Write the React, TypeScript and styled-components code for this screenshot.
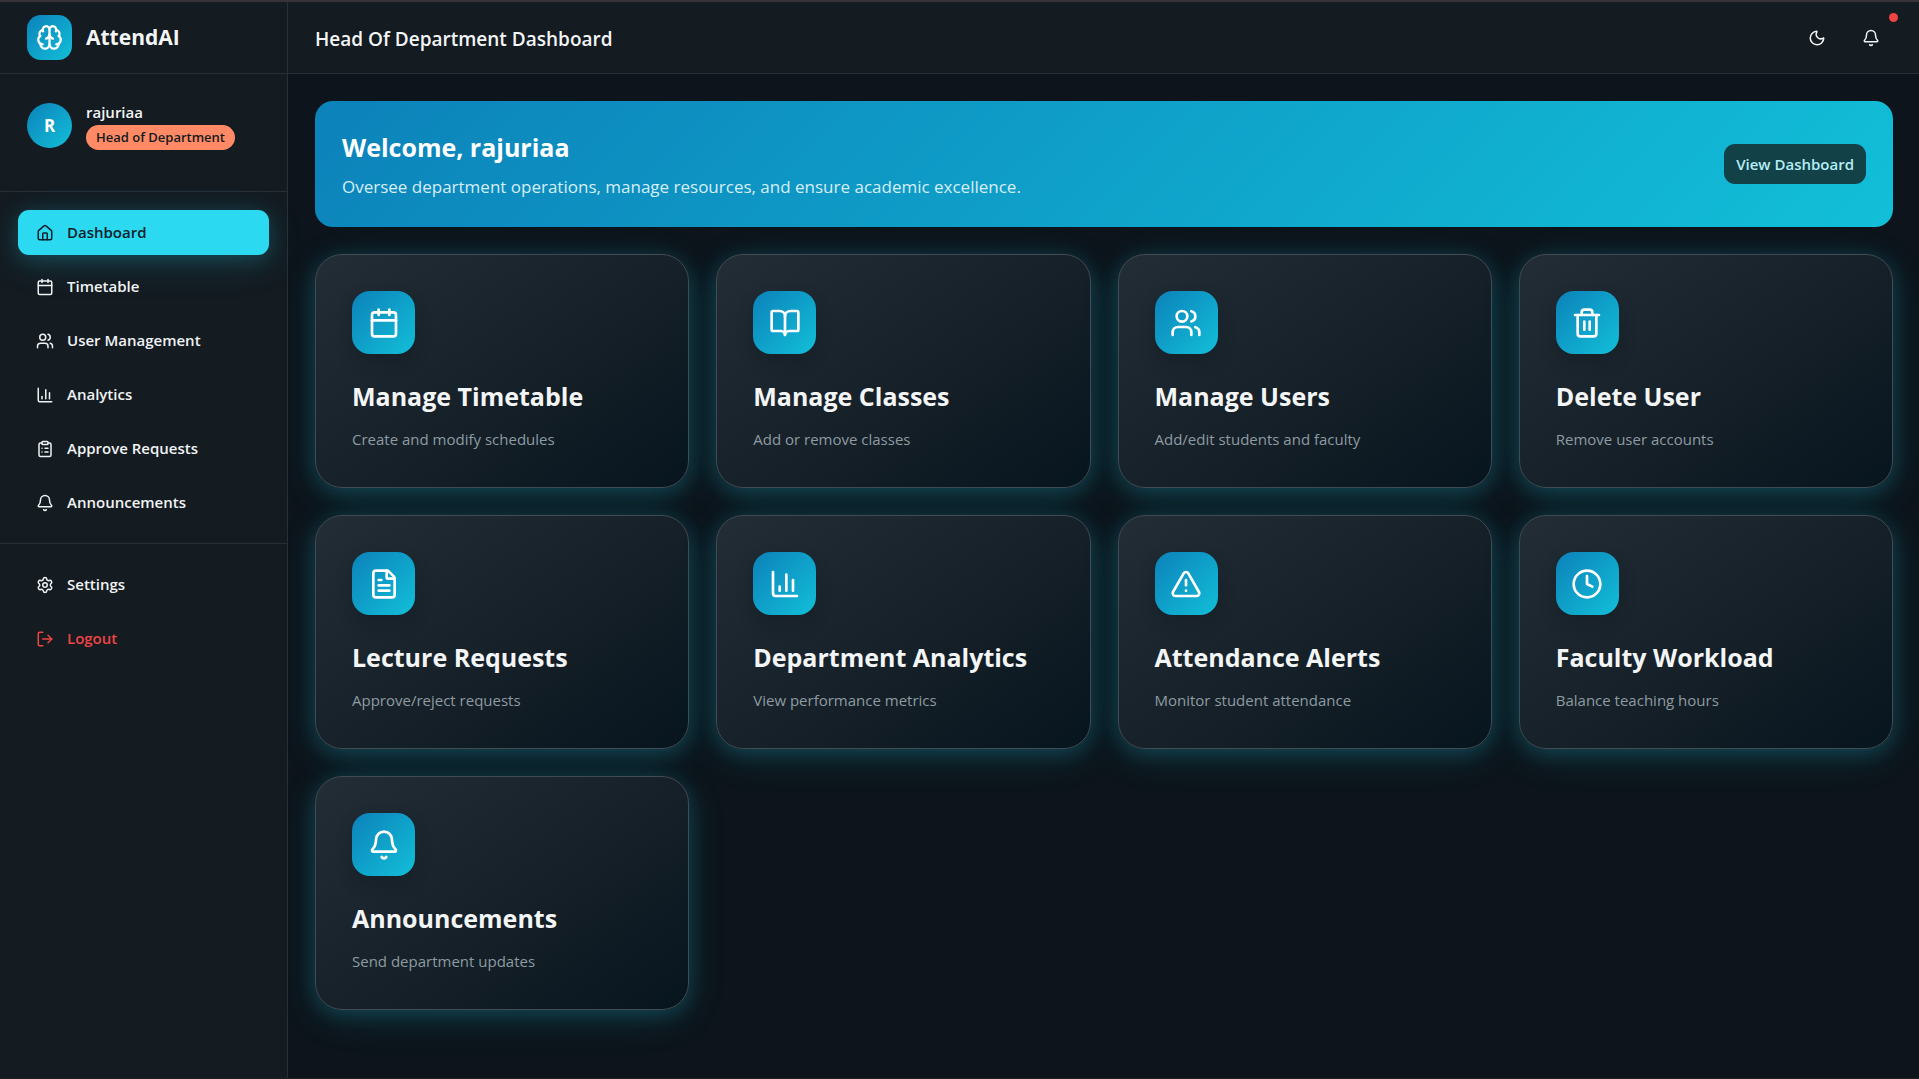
import React from "react";
import styled, { createGlobalStyle } from "styled-components";
import {
  Bell, BookOpen, Brain, Calendar, ChartColumn, ClipboardList, Clock, FileText,
  House, LogOut, Moon, Settings, Trash2, TriangleAlert, Users,
} from "lucide-react";
import type { LucideIcon } from "lucide-react";

const brand = "linear-gradient(135deg, #0c82ba 0%, #12bfd8 100%)";
const line = "#263038";
const glow = "0 4px 20px rgba(34, 211, 238, 0.2), 0 8px 40px rgba(34, 211, 238, 0.12)";

const GlobalStyle = createGlobalStyle`
  *, *::before, *::after { box-sizing: border-box; }
  body {
    margin: 0;
    background: #0d141b;
    color: #f3f5f6;
    font-family: "Open Sans", "Noto Sans", sans-serif;
    font-size: 15px;
    line-height: 23px;
  }
  h1, h2, h3, p { margin: 0; }
  button { font: inherit; color: inherit; border: 0; background: none; padding: 0; cursor: pointer; }
  a { color: inherit; text-decoration: none; }
  ul { list-style: none; margin: 0; padding: 0; }
`;

const Shell = styled.div`
  display: grid;
  grid-template-columns: 288px minmax(0, 1fr);
  min-height: 100vh;
  border-top: 2px solid #383338;
  border-bottom: 1px solid #211f23;
`;

const Sidebar = styled.aside`
  background: #141b21;
  border-right: 1px solid ${line};
`;

const Brand = styled.div`
  display: flex;
  align-items: center;
  gap: 14px;
  height: 72px;
  padding: 0 27px;
  border-bottom: 1px solid ${line};
  font-size: 21px;
  font-weight: 700;
`;

const Tile = styled.span<{ $size: number; $radius: number }>`
  display: flex;
  align-items: center;
  justify-content: center;
  flex: none;
  width: ${(p) => p.$size}px;
  height: ${(p) => p.$size}px;
  border-radius: ${(p) => p.$radius}px;
  background: ${brand};
  color: #fff;
  font-size: 17px;
  font-weight: 700;
`;

const CardTile = styled(Tile)`
  box-shadow: 0 8px 16px rgba(10, 18, 26, 0.25);
`;

const Profile = styled.div`
  display: flex;
  align-items: center;
  gap: 14px;
  padding: 27px 27px 41px;
  border-bottom: 1px solid ${line};
`;

const Person = styled.div`
  display: flex;
  flex-direction: column;
  align-items: flex-start;
  gap: 1px;
  font-weight: 600;
`;

const RoleBadge = styled.span`
  padding: 0 10px;
  border-radius: 13px;
  background: #ff8a65;
  color: #141b21;
  font-size: 13px;
  line-height: 25px;
  white-space: nowrap;
`;

const NavList = styled.ul`
  display: flex;
  flex-direction: column;
  gap: 9px;
  padding: 18px;
  & + & { border-top: 1px solid ${line}; }
`;

const NavLink = styled.a<{ $tone?: "active" | "danger" }>`
  display: flex;
  align-items: center;
  gap: 13px;
  height: 45px;
  padding: 0 18px;
  border-radius: 11px;
  font-weight: 600;
  color: ${(p) => (p.$tone === "active" ? "#10202a" : p.$tone === "danger" ? "#ef4444" : "#f0f3f4")};
  background: ${(p) => (p.$tone === "active" ? "#2bd9f1" : "transparent")};
  box-shadow: ${(p) => (p.$tone === "active" ? glow : "none")};
`;

const Main = styled.div`
  display: flex;
  flex-direction: column;
`;

const TopBar = styled.header`
  display: flex;
  align-items: center;
  justify-content: space-between;
  height: 72px;
  padding: 0 26px 0 27px;
  background: #141b21;
  border-bottom: 1px solid ${line};
`;

const PageTitle = styled.h1`
  padding-top: 4px;
  font-size: 19px;
  font-weight: 600;
`;

const Actions = styled.div`
  display: flex;
  gap: 9px;
`;

const IconButton = styled.button`
  position: relative;
  display: flex;
  align-items: center;
  justify-content: center;
  width: 45px;
  height: 41px;
`;

const AlertDot = styled.span`
  position: absolute;
  top: -4px;
  right: -5px;
  width: 9px;
  height: 9px;
  border-radius: 50%;
  background: #ef4444;
`;

const Content = styled.main`
  display: flex;
  flex-direction: column;
  gap: 27px;
  padding: 27px 26px 27px 27px;
`;

const Banner = styled.section`
  display: flex;
  align-items: center;
  justify-content: space-between;
  gap: 27px;
  padding: 27px;
  border-radius: 18px;
  background: ${brand};
`;

const BannerTitle = styled.h2`
  margin-bottom: 7px;
  color: #fff;
  font-size: 25px;
  font-weight: 700;
  line-height: 38px;
`;

const BannerText = styled.p`
  color: #d6eef8;
  font-size: 17px;
  line-height: 27px;
`;

const BannerButton = styled.button`
  flex: none;
  height: 40px;
  padding: 0 12px;
  border-radius: 11px;
  background: #134148;
  color: #b5eef5;
  font-weight: 600;
`;

const CardGrid = styled.div`
  display: grid;
  grid-template-columns: repeat(4, minmax(0, 1fr));
  gap: 27px;
`;

const Card = styled.a`
  display: block;
  padding: 36px;
  border: 1px solid #414b53;
  border-radius: 27px;
  background: linear-gradient(145deg, #232d35 0%, #172129 50%, #07151e 100%);
  box-shadow: ${glow};
`;

const CardTitle = styled.h3`
  margin: 24px 0 14px;
  font-size: 25px;
  font-weight: 700;
  line-height: 36px;
`;

const CardText = styled.p`
  color: #8d9ba2;
`;

type NavEntry = { label: string; icon: LucideIcon; tone?: "active" | "danger" };

const mainNav: NavEntry[] = [
  { label: "Dashboard", icon: House, tone: "active" },
  { label: "Timetable", icon: Calendar },
  { label: "User Management", icon: Users },
  { label: "Analytics", icon: ChartColumn },
  { label: "Approve Requests", icon: ClipboardList },
  { label: "Announcements", icon: Bell },
];

const accountNav: NavEntry[] = [
  { label: "Settings", icon: Settings },
  { label: "Logout", icon: LogOut, tone: "danger" },
];

const cards: { title: string; text: string; icon: LucideIcon }[] = [
  { title: "Manage Timetable", text: "Create and modify schedules", icon: Calendar },
  { title: "Manage Classes", text: "Add or remove classes", icon: BookOpen },
  { title: "Manage Users", text: "Add/edit students and faculty", icon: Users },
  { title: "Delete User", text: "Remove user accounts", icon: Trash2 },
  { title: "Lecture Requests", text: "Approve/reject requests", icon: FileText },
  { title: "Department Analytics", text: "View performance metrics", icon: ChartColumn },
  { title: "Attendance Alerts", text: "Monitor student attendance", icon: TriangleAlert },
  { title: "Faculty Workload", text: "Balance teaching hours", icon: Clock },
  { title: "Announcements", text: "Send department updates", icon: Bell },
];

function NavGroup({ entries }: { entries: NavEntry[] }) {
  return (
    <NavList>
      {entries.map(({ label, icon: Icon, tone }) => (
        <li key={label}>
          <NavLink href="#" $tone={tone}>
            <Icon size={18} />
            {label}
          </NavLink>
        </li>
      ))}
    </NavList>
  );
}

export default function App() {
  return (
    <>
      <GlobalStyle />
      <Shell>
        <Sidebar>
          <Brand>
            <Tile $size={45} $radius={14}><Brain size={27} /></Tile>
            AttendAI
          </Brand>
          <Profile>
            <Tile $size={45} $radius={23}>R</Tile>
            <Person>
              rajuriaa
              <RoleBadge>Head of Department</RoleBadge>
            </Person>
          </Profile>
          <nav>
            <NavGroup entries={mainNav} />
            <NavGroup entries={accountNav} />
          </nav>
        </Sidebar>
        <Main>
          <TopBar>
            <PageTitle>Head Of Department Dashboard</PageTitle>
            <Actions>
              <IconButton aria-label="Toggle theme"><Moon size={18} /></IconButton>
              <IconButton aria-label="Notifications">
                <Bell size={18} />
                <AlertDot />
              </IconButton>
            </Actions>
          </TopBar>
          <Content>
            <Banner>
              <div>
                <BannerTitle>Welcome, rajuriaa</BannerTitle>
                <BannerText>Oversee department operations, manage resources, and ensure academic excellence.</BannerText>
              </div>
              <BannerButton>View Dashboard</BannerButton>
            </Banner>
            <CardGrid>
              {cards.map(({ title, text, icon: Icon }) => (
                <Card href="#" key={title}>
                  <CardTile $size={63} $radius={18}><Icon size={32} /></CardTile>
                  <CardTitle>{title}</CardTitle>
                  <CardText>{text}</CardText>
                </Card>
              ))}
            </CardGrid>
          </Content>
        </Main>
      </Shell>
    </>
  );
}
